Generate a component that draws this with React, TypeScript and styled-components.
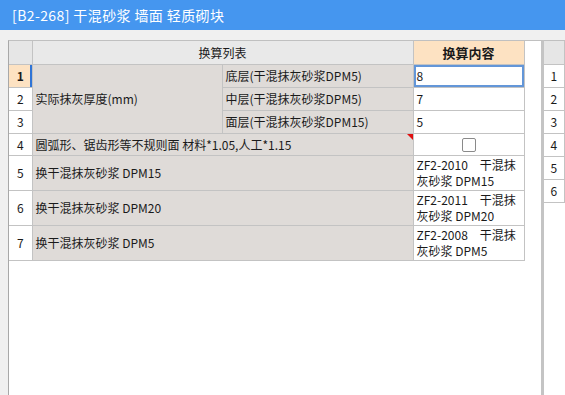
import React from 'react';
import styled, { createGlobalStyle } from 'styled-components';

const GlobalStyle = createGlobalStyle`
  html, body {
    margin: 0;
    padding: 0;
    background: #f0f0f0;
    font-family: "Noto Sans CJK SC", "Liberation Sans", sans-serif;
  }
`;

const Page = styled.div`
  width: 565px;
  height: 395px;
  overflow: hidden;
  display: flex;
  flex-direction: column;
`;

const TitleBar = styled.div`
  height: 30px;
  flex: none;
  background: #4596ef;
  color: #fff;
  font-size: 14px;
  letter-spacing: 0.4px;
  line-height: 30px;
  padding-left: 12px;
  white-space: pre;
`;

const Workspace = styled.div`
  flex: 1;
  display: flex;
  padding: 10px 0 0 8px;
  min-height: 0;
`;

const LeftPanel = styled.div`
  width: 532px;
  flex: none;
  background: #fff;
  border-left: 1px solid #a8a8a8;
  border-right: 3px solid #c4c4c4;
  border-top: 1px solid #c0c0c0;
`;

const RightPanel = styled.div`
  flex: 1;
  background: #fff;
  border-top: 1px solid #c0c0c0;
`;

const Grid = styled.table`
  border-collapse: collapse;
  table-layout: fixed;
  font-size: 12px;
  color: #1a1a1a;
  td, th {
    border: 1px solid #c3c3c3;
    padding: 0 3px;
    line-height: 15px;
    white-space: nowrap;
    overflow: hidden;
  }
  tr:first-child > * {
    border-top: none;
  }
  tr > *:first-child {
    border-left: none;
  }
`;

const Row = styled.tr<{ $h: number }>`
  height: ${p => p.$h}px;
`;

const NumCell = styled.td<{ $active?: boolean }>`
  text-align: center;
  background: ${p => (p.$active ? '#fde2c2' : '#fff')};
  font-weight: ${p => (p.$active ? 700 : 400)};
  box-shadow: ${p => (p.$active ? 'inset -2px 0 0 #2f74d6' : 'none')};
`;

const CornerCell = styled.th`
  background: #e6e6e6;
`;

const HeadCell = styled.th<{ $accent?: boolean }>`
  background: ${p => (p.$accent ? '#fde2c2' : '#e9e9e9')};
  font-weight: ${p => (p.$accent ? 700 : 400)};
  font-size: ${p => (p.$accent ? '13px' : '12px')};
  text-align: center;
`;

const NameCell = styled.td`
  position: relative;
  background: #dfdbd8;
  vertical-align: middle;
`;

const ValueCell = styled.td<{ $selected?: boolean; $top?: boolean }>`
  background: #fff;
  vertical-align: ${p => (p.$top ? 'top' : 'middle')};
  box-shadow: ${p => (p.$selected ? 'inset 0 0 0 2px #6396d8' : 'none')};
  padding-top: ${p => (p.$top ? '1px' : '0')} !important;
`;

const CenterCell = styled.td`
  background: #fff;
  text-align: center;
  vertical-align: middle;
`;

const Check = styled.span`
  display: inline-block;
  width: 12px;
  height: 12px;
  border: 1px solid #8a8a8a;
  border-radius: 2px;
  vertical-align: middle;
`;

const RedMark = styled.span`
  position: absolute;
  top: 0;
  right: 0;
  width: 0;
  height: 0;
  border-top: 6px solid #e01010;
  border-left: 6px solid transparent;
`;

const Line = styled.div`
  white-space: pre;
  height: 16px;
  line-height: 16px;
`;

const SideGrid = styled(Grid)`
  width: 100%;
`;

const SideHead = styled.th`
  background: #e6e6e6;
`;

const SideCell = styled.td`
  background: #e9e9e9;
`;

const items = [
  { n: 5, name: '换干混抹灰砂浆 DPM15', code: 'ZF2-2010　干混抹', tail: '灰砂浆 DPM15' },
  { n: 6, name: '换干混抹灰砂浆 DPM20', code: 'ZF2-2011　干混抹', tail: '灰砂浆 DPM20' },
  { n: 7, name: '换干混抹灰砂浆 DPM5', code: 'ZF2-2008　干混抹', tail: '灰砂浆 DPM5' },
];

export default function App() {
  return (
    <Page>
      <GlobalStyle />
      <TitleBar>[B2-268] 干混砂浆 墙面 轻质砌块</TitleBar>
      <Workspace>
        <LeftPanel>
          <Grid>
            <colgroup>
              <col style={{ width: 23 }} />
              <col style={{ width: 190 }} />
              <col style={{ width: 191 }} />
              <col style={{ width: 111 }} />
            </colgroup>
            <tbody>
              <Row $h={23}>
                <CornerCell />
                <HeadCell colSpan={2}>换算列表</HeadCell>
                <HeadCell $accent>换算内容</HeadCell>
              </Row>
              <Row $h={23}>
                <NumCell $active>1</NumCell>
                <NameCell rowSpan={3}>实际抹灰厚度(mm)</NameCell>
                <NameCell>底层(干混抹灰砂浆DPM5)</NameCell>
                <ValueCell $selected>8</ValueCell>
              </Row>
              <Row $h={23}>
                <NumCell>2</NumCell>
                <NameCell>中层(干混抹灰砂浆DPM5)</NameCell>
                <ValueCell>7</ValueCell>
              </Row>
              <Row $h={23}>
                <NumCell>3</NumCell>
                <NameCell>面层(干混抹灰砂浆DPM15)</NameCell>
                <ValueCell>5</ValueCell>
              </Row>
              <Row $h={22}>
                <NumCell>4</NumCell>
                <NameCell colSpan={2}>
                  圆弧形、锯齿形等不规则面 材料*1.05,人工*1.15
                  <RedMark />
                </NameCell>
                <CenterCell>
                  <Check />
                </CenterCell>
              </Row>
              {items.map(it => (
                <Row $h={35} key={it.n}>
                  <NumCell>{it.n}</NumCell>
                  <NameCell colSpan={2}>{it.name}</NameCell>
                  <ValueCell $top>
                    <Line>{it.code}</Line>
                    <Line>{it.tail}</Line>
                  </ValueCell>
                </Row>
              ))}
            </tbody>
          </Grid>
        </LeftPanel>
        <RightPanel>
          <SideGrid>
            <colgroup>
              <col style={{ width: 20 }} />
              <col />
            </colgroup>
            <tbody>
              <Row $h={23}>
                <SideHead colSpan={2} />
              </Row>
              {[1, 2, 3, 4, 5, 6].map(n => (
                <Row $h={23} key={n}>
                  <NumCell>{n}</NumCell>
                  <SideCell />
                </Row>
              ))}
            </tbody>
          </SideGrid>
        </RightPanel>
      </Workspace>
    </Page>
  );
}
